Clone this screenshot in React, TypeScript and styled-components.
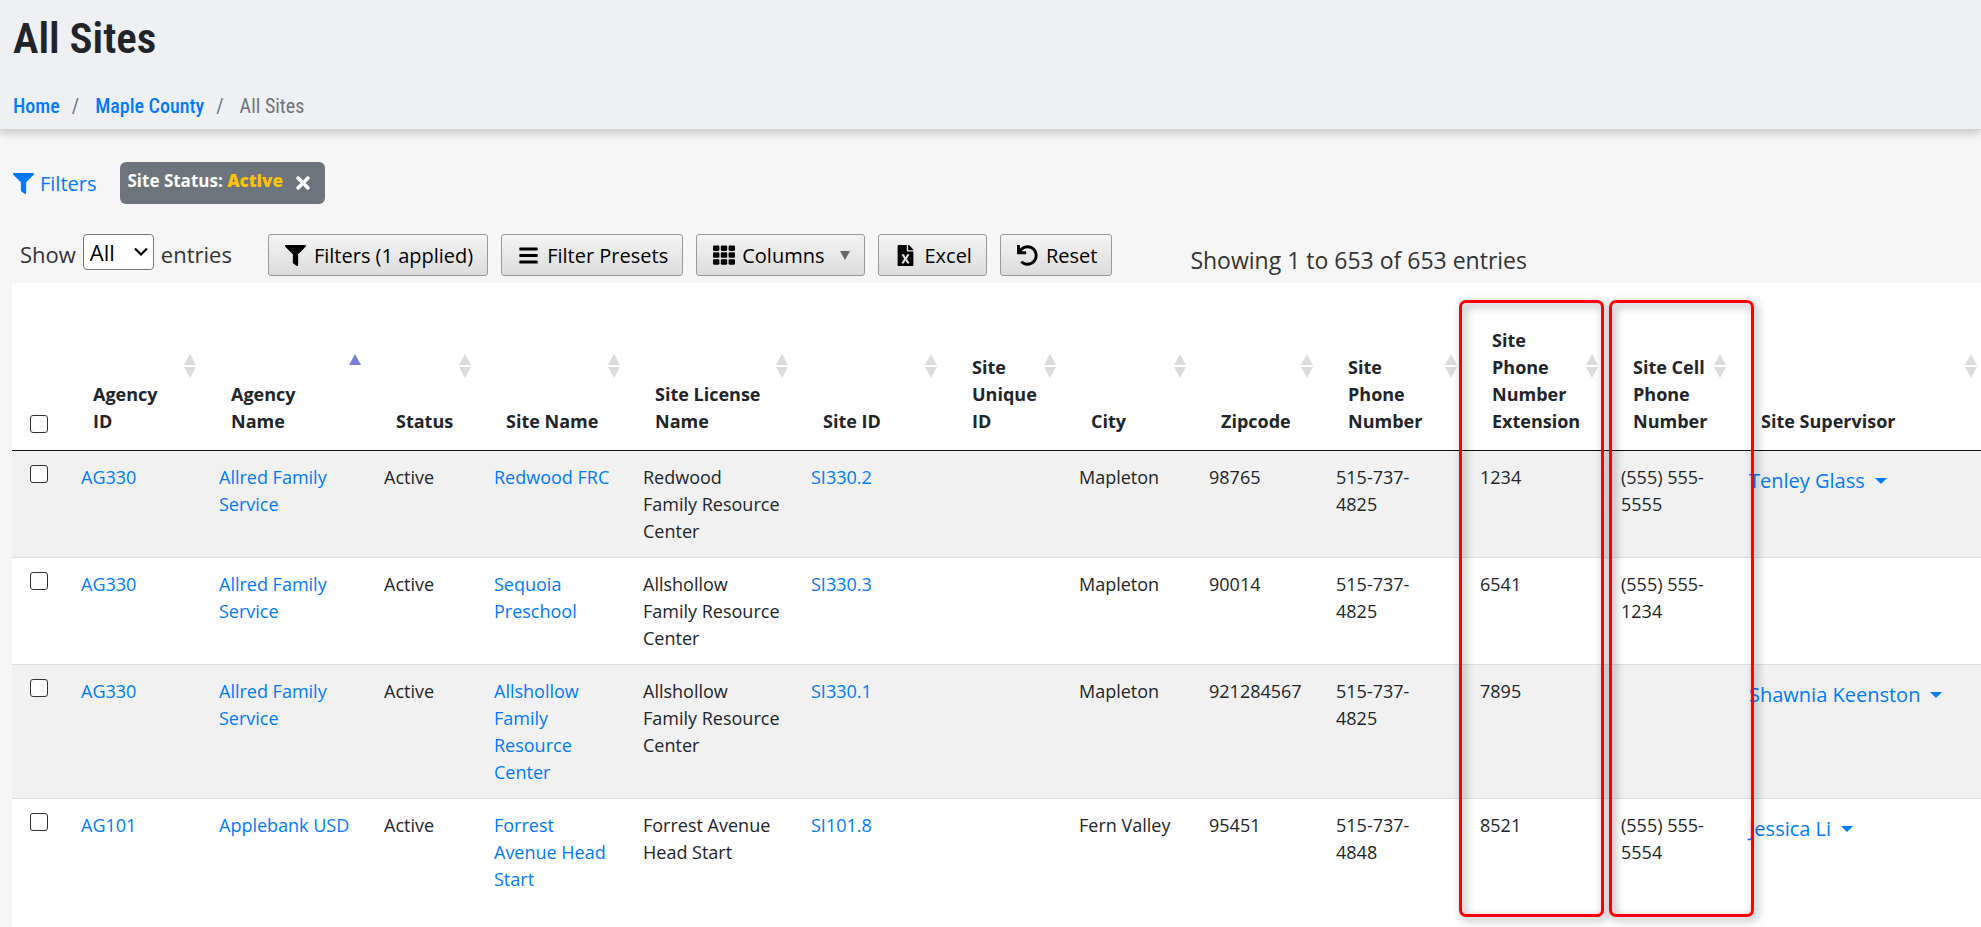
import React from "react";
import styled, { createGlobalStyle, css } from "styled-components";
import { FaBars, FaFileExcel, FaFilter, FaTh, FaTimes, FaUndo } from "react-icons/fa";

const BODY_FONT = '"Open Sans", "Noto Sans", sans-serif';
const HEAD_FONT = '"Roboto Condensed", Roboto, sans-serif';
const LINK = "#007bff";
const INK = "#212529";

const GlobalStyle = createGlobalStyle`
  *, *::before, *::after { box-sizing: border-box; }
  body {
    margin: 0;
    background: #f6f6f6;
    color: ${INK};
    font: 400 18px/27px ${BODY_FONT};
  }
  a { color: ${LINK}; text-decoration: none; }
  button, select, input { font-family: inherit; margin: 0; }
`;

const Page = styled.div`
  display: flex;
  flex-direction: column;
  min-height: 100vh;
  overflow-x: hidden;
`;

const PageHeader = styled.header`
  padding: 12px 13px 9px;
  background: #eff0f4;
  border-bottom: 1px solid #d3d4d8;
  box-shadow: 0 3px 9px rgba(0, 0, 0, 0.2);
  font-family: ${HEAD_FONT};
`;

const Title = styled.h1`
  margin: 0;
  font-size: 43px;
  line-height: 52px;
  font-weight: 600;
`;

const Crumbs = styled.ol`
  display: flex;
  margin: 28px 0 0;
  padding: 0;
  list-style: none;
  font-size: 20px;
  line-height: 28px;
`;

const Crumb = styled.li<{ $current?: boolean }>`
  color: #6c757d;
  a { font-weight: 500; }
  & + &::before {
    content: "/";
    padding: 0 16px 0 12px;
    color: #6c757d;
  }
`;

const FilterBar = styled.div`
  display: flex;
  align-items: center;
  gap: 24px;
  padding: 32px 13px 0;
`;

const FiltersLink = styled.a`
  display: flex;
  align-items: center;
  gap: 6px;
  font-size: 20px;
`;

const Tag = styled.span`
  display: flex;
  align-items: flex-start;
  gap: 10px;
  height: 42px;
  padding: 5px 12px 0 7px;
  border-radius: 6px;
  background: #6c757d;
  color: #fff;
  font-size: 17px;
  font-weight: 700;
`;

const TagValue = styled.span`
  color: #ffc107;
  font-weight: 800;
`;

const TagClose = styled.button`
  display: flex;
  padding: 6px 0 0;
  border: 0;
  background: none;
  color: #fff;
  font-size: 20px;
  cursor: pointer;
`;

const Toolbar = styled.div`
  display: flex;
  align-items: flex-start;
  padding: 30px 20px 7px;
  color: #333;
  font-size: 23px;
`;

const LengthLabel = styled.label`
  display: flex;
  align-items: center;
  gap: 7px;
  height: 40px;
  font-size: 22px;
`;

const SelectBox = styled.span`
  position: relative;
  display: flex;
  margin-bottom: 4px;
`;

const LengthSelect = styled.select`
  appearance: none;
  width: 71px;
  height: 36px;
  padding: 0 0 0 6px;
  border: 1px solid #777;
  border-radius: 4px;
  background: #fff;
  color: #000;
  font-size: 22px;
  line-height: 32px;
`;

const SelectArrow = styled.svg`
  position: absolute;
  right: 6px;
  top: 13px;
  width: 14px;
  height: 10px;
  pointer-events: none;
`;

const Buttons = styled.div`
  display: flex;
  gap: 13px;
  margin: 0 78px 0 36px;
`;

const ToolButton = styled.button`
  display: flex;
  align-items: center;
  gap: 6px;
  height: 42px;
  padding: 0 14px;
  border: 1px solid #999;
  border-radius: 3px;
  background: linear-gradient(#f4f4f4, #dcdcdc);
  color: #000;
  font-size: 20px;
  white-space: nowrap;
  cursor: pointer;
`;

const IconSlot = styled.span`
  display: flex;
  justify-content: center;
  width: 25px;
`;

const MenuArrow = styled.svg`
  width: 10px;
  height: 9px;
  margin-left: 10px;
`;

const Info = styled.div`
  padding-top: 13px;
  white-space: nowrap;
`;

const TablePanel = styled.main`
  position: relative;
  flex: 1;
  margin: 0 -7px 0 12px;
  background: #fff;
`;

const Table = styled.table`
  width: 100%;
  table-layout: fixed;
  border-collapse: separate;
  border-spacing: 0;
`;

const Col = styled.col<{ $w?: number }>`
  ${(p) => p.$w && css`width: ${p.$w}px;`}
`;

const HeadCell = styled.th<{ $right?: number }>`
  position: relative;
  height: 168px;
  padding: 12px 24px 15px;
  padding-right: ${(p) => p.$right ?? 24}px;
  border-bottom: 1px solid #111;
  text-align: left;
  vertical-align: bottom;
  font-weight: 700;
`;

const CheckHead = styled(HeadCell)`
  padding: 0 0 17px 18px;
  line-height: 0;
`;

const SortMark = styled.svg`
  position: absolute;
  right: 11px;
  top: 71px;
  width: 12px;
  height: 24px;
`;

const Row = styled.tr`
  &:nth-child(odd) { background: #f1f1f1; }
  & + & > td { border-top: 1px solid #ddd; }
`;

const Cell = styled.td`
  padding: 13px 19px 12px 12px;
  vertical-align: top;
`;

const CheckCell = styled(Cell)`
  padding: 14px 0 0 18px;
  line-height: 0;
`;

const SupervisorCell = styled(Cell)`
  padding-top: 16px;
`;

const Check = styled.input`
  appearance: none;
  width: 18px;
  height: 18px;
  border: 1px solid #333;
  border-radius: 3px;
  background: #fff;
  &:checked { background: ${LINK}; border-color: ${LINK}; }
`;

const SupervisorButton = styled.button`
  display: flex;
  align-items: center;
  gap: 10px;
  padding: 0;
  border: 0;
  background: none;
  color: ${LINK};
  font-size: 20px;
  line-height: 27px;
  white-space: nowrap;
  cursor: pointer;
`;

const Caret = styled.svg`
  width: 12px;
  height: 6px;
`;

const Highlight = styled.div<{ $left: number; $width: number }>`
  position: absolute;
  top: 17px;
  bottom: 10px;
  left: ${(p) => p.$left}px;
  width: ${(p) => p.$width}px;
  border: 3px solid #f00;
  border-radius: 7px;
  filter: drop-shadow(3px 3px 4px rgba(0, 0, 0, 0.45));
  pointer-events: none;
`;

type Sort = "none" | "asc";

const columns: { label: string; width?: number; sort: Sort; right?: number }[] = [
  { label: "Agency ID", width: 138, sort: "none", right: 36 },
  { label: "Agency Name", width: 165, sort: "asc", right: 36 },
  { label: "Status", width: 110, sort: "none" },
  { label: "Site Name", width: 149, sort: "none" },
  { label: "Site License Name", width: 168, sort: "none" },
  { label: "Site ID", width: 149, sort: "none" },
  { label: "Site Unique ID", width: 119, sort: "none" },
  { label: "City", width: 130, sort: "none" },
  { label: "Zipcode", width: 127, sort: "none" },
  { label: "Site Phone Number", width: 144, sort: "none", right: 36 },
  { label: "Site Phone Number Extension", width: 141, sort: "none" },
  { label: "Site Cell Phone Number", width: 128, sort: "none" },
  { label: "Site Supervisor", sort: "none" },
];

const rows = [
  { id: "AG330", agency: "Allred Family Service", status: "Active", name: "Redwood FRC", license: "Redwood Family Resource Center", site: "SI330.2", city: "Mapleton", zip: "98765", phone: "515-737-4825", ext: "1234", cell: "(555) 555-5555", supervisor: "Tenley Glass" },
  { id: "AG330", agency: "Allred Family Service", status: "Active", name: "Sequoia Preschool", license: "Allshollow Family Resource Center", site: "SI330.3", city: "Mapleton", zip: "90014", phone: "515-737-4825", ext: "6541", cell: "(555) 555-1234", supervisor: "" },
  { id: "AG330", agency: "Allred Family Service", status: "Active", name: "Allshollow Family Resource Center", license: "Allshollow Family Resource Center", site: "SI330.1", city: "Mapleton", zip: "921284567", phone: "515-737-4825", ext: "7895", cell: "", supervisor: "Shawnia Keenston" },
  { id: "AG101", agency: "Applebank USD", status: "Active", name: "Forrest Avenue Head Start", license: "Forrest Avenue Head Start", site: "SI101.8", city: "Fern Valley", zip: "95451", phone: "515-737-4848", ext: "8521", cell: "(555) 555-5554", supervisor: "Jessica Li" },
];

function SortIcon({ sort }: { sort: Sort }) {
  return (
    <SortMark viewBox="0 0 12 24" aria-hidden="true">
      <path d="M6 0L12 11H0Z" fill={sort === "asc" ? "#7b80dc" : "#dcdcdc"} />
      {sort === "none" && <path d="M0 13H12L6 24Z" fill="#dcdcdc" />}
    </SortMark>
  );
}

export default function App() {
  return (
    <Page>
      <GlobalStyle />
      <PageHeader>
        <Title>All Sites</Title>
        <nav aria-label="Breadcrumb">
          <Crumbs>
            <Crumb><a href="#home">Home</a></Crumb>
            <Crumb><a href="#county">Maple County</a></Crumb>
            <Crumb aria-current="page">All Sites</Crumb>
          </Crumbs>
        </nav>
      </PageHeader>

      <FilterBar>
        <FiltersLink href="#filters"><FaFilter size={21} />Filters</FiltersLink>
        <Tag>
          <span>Site Status: <TagValue>Active</TagValue></span>
          <TagClose type="button" aria-label="Remove Site Status filter"><FaTimes /></TagClose>
        </Tag>
      </FilterBar>

      <Toolbar>
        <LengthLabel>
          Show
          <SelectBox>
            <LengthSelect defaultValue="All">
              <option>All</option>
            </LengthSelect>
            <SelectArrow viewBox="0 0 14 10" aria-hidden="true">
              <path d="M1 1.5L7 7.5L13 1.5" fill="none" stroke="#000" strokeWidth="2.2" />
            </SelectArrow>
          </SelectBox>
          entries
        </LengthLabel>
        <Buttons>
          <ToolButton type="button"><IconSlot><FaFilter size={21} /></IconSlot>Filters (1 applied)</ToolButton>
          <ToolButton type="button"><IconSlot><FaBars size={21} /></IconSlot>Filter Presets</ToolButton>
          <ToolButton type="button">
            <IconSlot><FaTh size={22} /></IconSlot>Columns
            <MenuArrow viewBox="0 0 10 9" aria-hidden="true"><path d="M0 0H10L5 9Z" fill="#666" /></MenuArrow>
          </ToolButton>
          <ToolButton type="button"><IconSlot><FaFileExcel size={21} /></IconSlot>Excel</ToolButton>
          <ToolButton type="button"><IconSlot><FaUndo size={21} /></IconSlot>Reset</ToolButton>
        </Buttons>
        <Info>Showing 1 to 653 of 653 entries</Info>
      </Toolbar>

      <TablePanel>
        <Table>
          <colgroup>
            <Col $w={57} />
            {columns.map((c) => <Col key={c.label} $w={c.width} />)}
          </colgroup>
          <thead>
            <tr>
              <CheckHead><Check type="checkbox" aria-label="Select all sites" /></CheckHead>
              {columns.map((c) => (
                <HeadCell key={c.label} $right={c.right} aria-sort={c.sort === "asc" ? "ascending" : undefined}>
                  {c.label}
                  <SortIcon sort={c.sort} />
                </HeadCell>
              ))}
            </tr>
          </thead>
          <tbody>
            {rows.map((r) => (
              <Row key={r.site}>
                <CheckCell><Check type="checkbox" aria-label={`Select ${r.name}`} /></CheckCell>
                <Cell><a href="#agency">{r.id}</a></Cell>
                <Cell><a href="#agency">{r.agency}</a></Cell>
                <Cell>{r.status}</Cell>
                <Cell><a href="#site">{r.name}</a></Cell>
                <Cell>{r.license}</Cell>
                <Cell><a href="#site">{r.site}</a></Cell>
                <Cell />
                <Cell>{r.city}</Cell>
                <Cell>{r.zip}</Cell>
                <Cell>{r.phone}</Cell>
                <Cell>{r.ext}</Cell>
                <Cell>{r.cell}</Cell>
                <SupervisorCell>
                  {r.supervisor && (
                    <SupervisorButton type="button">
                      {r.supervisor}
                      <Caret viewBox="0 0 12 6" aria-hidden="true"><path d="M0 0H12L6 6Z" fill="currentColor" /></Caret>
                    </SupervisorButton>
                  )}
                </SupervisorCell>
              </Row>
            ))}
          </tbody>
        </Table>
        <Highlight $left={1447} $width={145} />
        <Highlight $left={1597} $width={145} />
      </TablePanel>
    </Page>
  );
}
